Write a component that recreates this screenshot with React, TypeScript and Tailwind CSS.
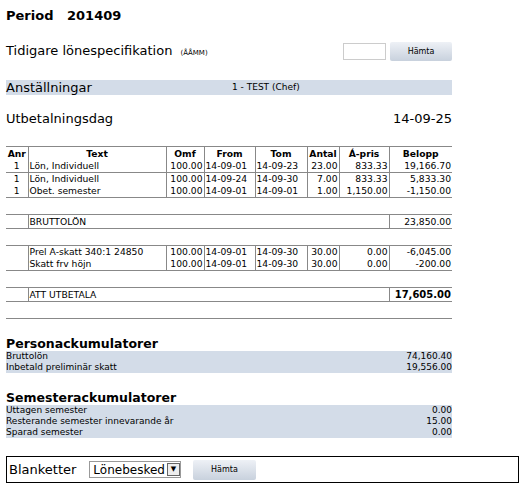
const font = { fontFamily: '"DejaVu Sans", Verdana, sans-serif' }

const cols = ["w-[22px]", "w-[138px]", "w-[38px]", "w-[51px]", "w-[52px]", "w-[32px]", "w-[50px]", "w-[63px]"]

type Row = string[]

function Cells({ row, bold }: { row: Row; bold?: boolean }) {
  return (
    <>
      {row.map((c, i) => (
        <td
          key={i}
          className={`${cols[i]} px-[1px] leading-[12px] ${i > 0 ? "border-l border-[#888]" : ""} ${
            i === 0 ? "text-center" : i === 1 ? "text-left" : i === 2 || i === 5 || i === 6 || i === 7 ? "text-right" : "text-left"
          } ${bold ? "font-bold" : ""}`}
        >
          {c}
        </td>
      ))}
    </>
  )
}

function Sep({ gap }: { gap?: boolean }) {
  return (
    <tr>
      <td colSpan={8} className={`${gap ? "h-[17px]" : "h-0"} border-b border-[#888] p-0`} />
    </tr>
  )
}

function SumRow({ label, value, bold }: { label: string; value: string; bold?: boolean }) {
  return (
    <tr>
      <td className="leading-[13px]" />
      <td colSpan={6} className="border-l border-[#888] px-[1px] leading-[13px]">{label}</td>
      <td className={`border-l border-[#888] px-[1px] text-right leading-[13px] ${bold ? "font-bold text-[10px]" : ""}`}>{value}</td>
    </tr>
  )
}

export default function App() {
  return (
    <div className="h-[492px] w-[525px] bg-white text-black" style={font}>
      <div className="px-[6px] pt-[8px]">
        <h1 className="text-[13px] font-bold leading-[16px]">Period&nbsp;&nbsp; 201409</h1>
        <div className="mt-[18px] flex h-[19px] w-[446px] items-center justify-between">
          <p className="text-[13px] leading-[16px]">
            Tidigare lönespecifikation <span className="ml-1 text-[7px]">(ÅÅMM)</span>
          </p>
          <div className="flex items-center gap-[4px]">
            <div className="h-[17px] w-[43px] border border-[#ccc]" />
            <button className="h-[19px] w-[62px] rounded-[2px] bg-gradient-to-b from-[#eef1f6] to-[#c8d1dd] text-[8px]">Hämta</button>
          </div>
        </div>
        <div className="mt-[19px] flex h-[15px] w-[446px] items-center bg-[#d3dce8]">
          <span className="w-[226px] text-[13px] leading-[15px]">Anställningar</span>
          <span className="text-[9px]">1 - TEST (Chef)</span>
        </div>
        <div className="mt-[16px] flex w-[446px] justify-between text-[13px] leading-[16px]">
          <span>Utbetalningsdag</span>
          <span>14-09-25</span>
        </div>
        <table className="mt-[19px] w-[446px] table-fixed border-collapse border-t border-[#888] text-[9.2px]">
          <tbody>
            <tr className="font-bold">
              {["Anr", "Text", "Omf", "From", "Tom", "Antal", "Á-pris", "Belopp"].map((h, i) => (
                <td key={i} className={`${cols[i]} pt-[1px] text-center leading-[12px] ${i > 0 ? "border-l border-[#888]" : ""}`}>{h}</td>
              ))}
            </tr>
            <tr className="border-b border-[#888]">
              <Cells row={["1", "Lön, Individuell", "100.00", "14-09-01", "14-09-23", "23.00", "833.33", "19,166.70"]} />
            </tr>
            <tr>
              <Cells row={["1", "Lön, Individuell", "100.00", "14-09-24", "14-09-30", "7.00", "833.33", "5,833.30"]} />
            </tr>
            <tr>
              <Cells row={["1", "Obet. semester", "100.00", "14-09-01", "14-09-01", "1.00", "1,150.00", "-1,150.00"]} />
            </tr>
            <Sep />
            <Sep gap />
            <SumRow label="BRUTTOLÖN" value="23,850.00" />
            <Sep />
            <Sep gap />
            <tr>
              <Cells row={["", "Prel A-skatt 340:1 24850", "100.00", "14-09-01", "14-09-30", "30.00", "0.00", "-6,045.00"]} />
            </tr>
            <tr>
              <Cells row={["", "Skatt frv höjn", "100.00", "14-09-01", "14-09-30", "30.00", "0.00", "-200.00"]} />
            </tr>
            <Sep />
            <Sep gap />
            <SumRow label="ATT UTBETALA" value="17,605.00" bold />
            <Sep />
            <Sep gap />
          </tbody>
        </table>
        <h2 className="mt-[18px] text-[12.5px] font-bold leading-[14px]">Personackumulatorer</h2>
        <div className="w-[446px] bg-[#d3dce8] text-[9px] leading-[11px]">
          <div className="flex justify-between"><span>Bruttolön</span><span>74,160.40</span></div>
          <div className="flex justify-between"><span>Inbetald preliminär skatt</span><span>19,556.00</span></div>
        </div>
        <h2 className="mt-[18px] text-[12.5px] font-bold leading-[14px]">Semesterackumulatorer</h2>
        <div className="w-[446px] bg-[#d3dce8] text-[9px] leading-[11px]">
          <div className="flex justify-between"><span>Uttagen semester</span><span>0.00</span></div>
          <div className="flex justify-between"><span>Resterande semester innevarande år</span><span>15.00</span></div>
          <div className="flex justify-between"><span>Sparad semester</span><span>0.00</span></div>
        </div>
        <div className="mt-[18px] flex h-[27px] w-[513px] items-center border border-black pl-[2px]">
          <span className="text-[13px]">Blanketter</span>
          <div className="ml-[13px] flex h-[17px] items-center border border-[#999] pl-[3px] text-[12px]">
            Lönebesked
            <span className="ml-[2px] flex h-[13px] w-[13px] items-center justify-center border border-[#666] bg-[#eee] text-[7px]">▼</span>
          </div>
          <button className="ml-[12px] h-[20px] w-[63px] rounded-[2px] bg-gradient-to-b from-[#eef1f6] to-[#c8d1dd] text-[8px]">Hämta</button>
        </div>
      </div>
    </div>
  )
}
